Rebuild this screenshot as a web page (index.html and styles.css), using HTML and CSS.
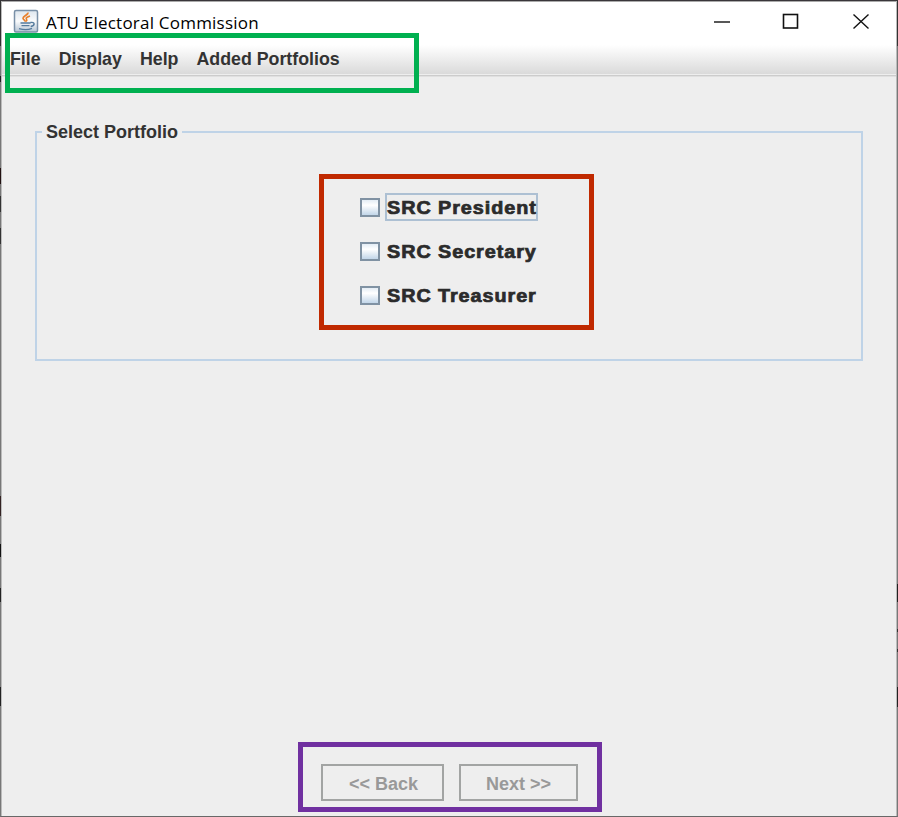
FILE: index.html
```html
<!DOCTYPE html>
<html lang="en">
<head>
<meta charset="utf-8">
<title>ATU Electoral Commission</title>
<link rel="stylesheet" href="styles.css">
</head>
<body>
<div class="window">
  <header class="titlebar">
    <svg class="app-icon" width="26" height="24" viewBox="0 0 26 24">
      <defs><linearGradient id="tile" x1="0" y1="0" x2="0" y2="1"><stop offset="0" stop-color="#dde6ee"/><stop offset=".5" stop-color="#fafbfc"/><stop offset="1" stop-color="#b4c4d3"/></linearGradient></defs>
      <rect x="1.500" y="1.500" width="23" height="21.500" rx="1.500" fill="url(#tile)" stroke="#7990a7" stroke-width="1.500"/>
      <path d="M14.800 3.500c1 2.300-4.800 3.500-4.800 5.700 0 1.500 2.500 2 2 3.500M17 7c-2.500.8-4.500 2-3.500 3.200.8 1 .3 1.500-.5 2.300" fill="none" stroke="#e8812d" stroke-width="1.700"/>
      <path d="M7.500 14h10M8.500 16.600h8M6 19.600c4 1.200 9.500 1.200 13-.2M17.500 13.500c4.500-1 5 3 .2 4" fill="none" stroke="#557b9d" stroke-width="1.400"/>
    </svg>
    <h1 class="title">ATU Electoral Commission</h1>
    <svg class="controls" width="160" height="20" viewBox="0 0 160 20" fill="none" stroke="#111" stroke-width="1.400">
      <path d="M2 11h16"/>
      <rect x="71.500" y="3.500" width="14" height="13.500" stroke-width="1.600"/>
      <path d="M141.500 3.500l15 14M156.500 3.500l-15 14"/>
    </svg>
  </header>
  <nav class="menubar"><span>File</span><span>Display</span><span>Help</span><span>Added Portfolios</span></nav>
  <main class="content">
    <fieldset class="portfolio">
      <legend>Select Portfolio</legend>
      <div class="choices">
        <div class="choice focused"><i class="box"></i><span class="label"><b>SRC President</b></span></div>
        <div class="choice"><i class="box"></i><span class="label"><b>SRC Secretary</b></span></div>
        <div class="choice"><i class="box"></i><span class="label"><b>SRC Treasurer</b></span></div>
      </div>
    </fieldset>
    <footer class="actions">
      <button class="back" disabled>&lt;&lt; Back</button>
      <button class="next" disabled>Next &gt;&gt;</button>
    </footer>
  </main>
</div>
<div class="mark mark-menu"></div>
<div class="mark mark-choices"></div>
<div class="mark mark-actions"></div>
</body>
</html>
```
FILE: styles.css
```css
* { box-sizing: border-box; }
/* The desktop behind the window shows through its 1px side borders. */
body {
  margin: 0;
  overflow: hidden;
  font: bold 18px/22px "Liberation Sans", Arial, sans-serif;
  color: #333;
  background:
    linear-gradient(#333 46px, #777 46px, #777 76px, #222 76px, #222 82px, #777 82px, #777 168px, #211 168px, #211 184px, #777 184px, #777 196px, #333 196px, #333 212px, #777 212px, #777 228px, #333 228px, #333 244px, #777 244px, #777 496px, #322 496px, #322 516px, #777 516px, #777 544px, #111 544px, #111 557px, #777 557px, #777 588px, #222 588px, #222 602px, #777 602px, #777 687px, #222 687px, #222 706px, #777 706px) 0 0 / 1px 817px no-repeat,
    linear-gradient(#333 46px, #777 46px, #777 584px, #222 584px, #222 602px, #777 602px, #777 629px, #333 629px, #333 632px, #777 632px, #777 649px, #333 649px, #333 652px, #777 652px, #777 687px, #222 687px, #222 707px, #777 707px) 897px 0 / 1px 817px no-repeat;
}
.window {
  display: flex;
  flex-direction: column;
  width: 898px;
  height: 817px;
  background: #eee;
  background-clip: padding-box;
  border: 1px solid transparent;
  border-top-color: #39363a;
  border-bottom-color: #686868;
  box-shadow: inset 1px 0 #bbb, inset -1px 0 #bbb;
}
.titlebar { display: flex; height: 44px; margin: 0 1px; background: #fff; padding: 8px 24px 0 11px; border-top: 1px solid #aaa; }
.app-icon { flex: none; margin-top: -1px; }
.title { margin: 1px 0 0 7px; font: 400 17px/24px "Open Sans", "Noto Sans", sans-serif; letter-spacing: .22px; color: #000; white-space: nowrap; }
.controls { margin: 1px 0 0 auto; }
.menubar {
  display: flex;
  gap: 18px;
  height: 32px;
  margin: 0 1px;
  padding: 3px 0 0 8px;
  font-size: 17.8px;
  background: linear-gradient(#fff, #dadada 29px, #eee 29px, #eee 30px, #ccc 30px, #ccc 31px, #e0e0e0 31px);
}
.content { flex: 1; display: flex; flex-direction: column; justify-content: space-between; padding: 44px 34px 15px; }
.portfolio { width: 828px; height: 240px; margin: 0; padding: 50px 0 0; border: 2px solid #bfd3e7; }
.portfolio legend { margin-left: 5px; padding: 0 4px; }
.choices { display: flex; flex-direction: column; gap: 16px; width: 180px; margin-left: 323px; }
.choice { display: flex; align-items: center; gap: 5px; height: 28px; }
.box { flex: none; width: 20px; height: 19px; margin-top: 1px; border: 2px solid #8092a3; background: linear-gradient(#e4edf5, #fff 35%, #c2d6e9); }
.label { width: 153px; height: 28px; padding: 2px 0 0; border: 2px solid transparent; color: #2b2b2b; white-space: nowrap; }
.label b { display: inline-block; transform: scaleX(1.1); transform-origin: left; letter-spacing: .85px; -webkit-text-stroke: .7px #2b2b2b; }
.focused .label { border-color: #adc0d3; }
.actions { display: flex; gap: 15px; margin-left: 286px; }
.actions button { height: 37px; padding: 2px 0 0; border: 2px solid #a2a4a3; background: #eee; color: #999; font: inherit; }
.actions .back { width: 123px; padding-left: 2px; }
.actions .next { width: 119px; }
.mark { position: absolute; border: 5px solid; pointer-events: none; }
.mark-menu { left: 5px; top: 33px; width: 414px; height: 60px; border-color: #00b050; }
.mark-choices { left: 319px; top: 174px; width: 275px; height: 156px; border-color: #c02900; }
.mark-actions { left: 298px; top: 742px; width: 304px; height: 70px; border-color: #7030a0; }
```
